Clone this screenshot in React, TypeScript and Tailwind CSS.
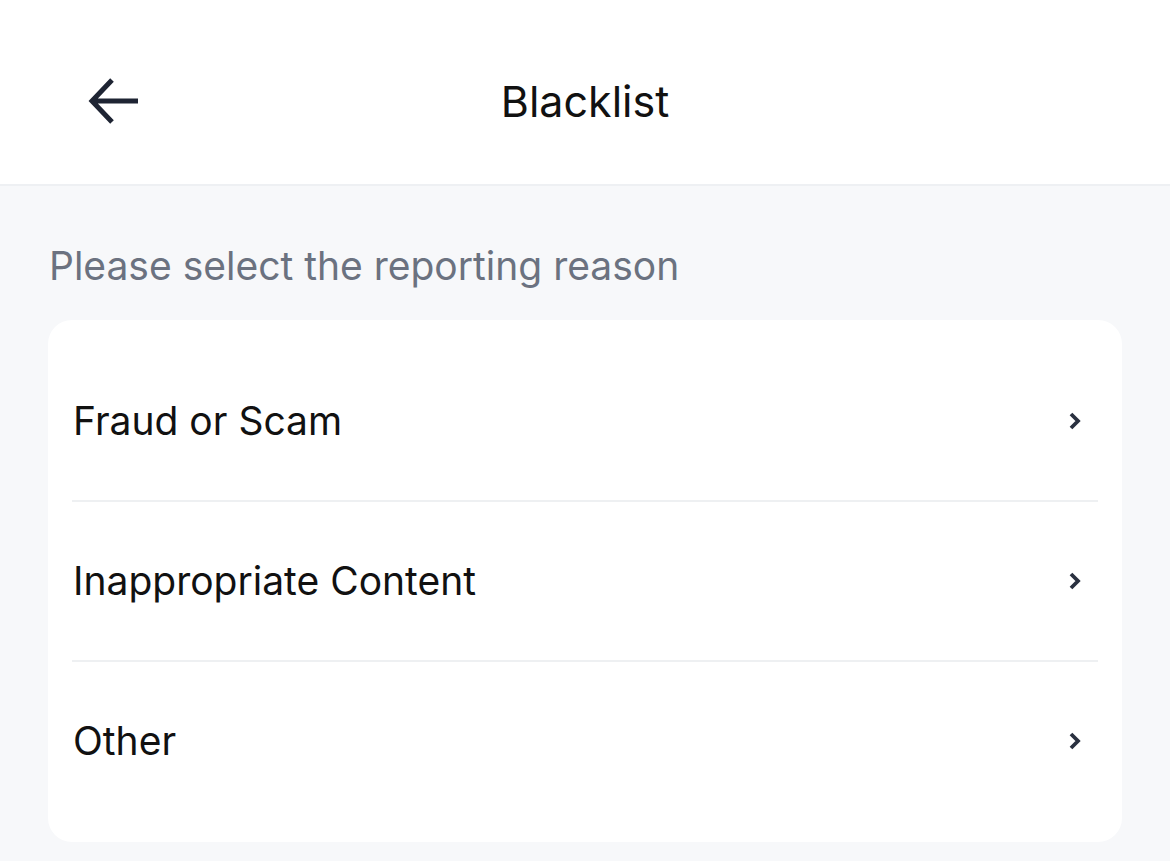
import React from 'react';

const reasons = ['Fraud or Scam', 'Inappropriate Content', 'Other'];

const BackIcon = () => (
  <svg width="52" height="48" viewBox="0 0 52 48" fill="none">
    <path d="M50 23H6M24 2L4 23L24 44" stroke="#1e2433" strokeWidth="5" strokeLinecap="butt" strokeLinejoin="miter" />
  </svg>
);

const Chevron = () => (
  <svg width="14" height="18" viewBox="0 0 14 18" fill="none">
    <path d="M3 2L10 9L3 16" stroke="#2a3140" strokeWidth="3.8" />
  </svg>
);

export default function App() {
  return (
    <div className="min-h-screen bg-[#f7f8fa] font-['Inter',sans-serif]">
      <header className="relative h-[186px] bg-white border-b-2 border-[#eef0f3] flex items-center justify-center">
        <button className="absolute left-[88px] top-[78px]" aria-label="Back">
          <BackIcon />
        </button>
        <h1 className="text-[43px] text-[#111] pt-[18px]">Blacklist</h1>
      </header>

      <main className="px-[48px]">
        <p className="pt-[58px] pb-[32px] pl-[1px] text-[39px] leading-[44px] text-[#6b7280]">
          Please select the reporting reason
        </p>
        <div className="bg-white rounded-[24px] px-[24px] py-[22px]">
          {reasons.map((r, i) => (
            <div key={r}>
              {i > 0 && <div className="h-[2px] bg-[#eef0f2]" />}
              <div className="h-[158px] flex items-center justify-between pl-[1px] pr-[16px]">
                <span className="text-[39px] text-[#111]">{r}</span>
                <Chevron />
              </div>
            </div>
          ))}
        </div>
      </main>
    </div>
  );
}
